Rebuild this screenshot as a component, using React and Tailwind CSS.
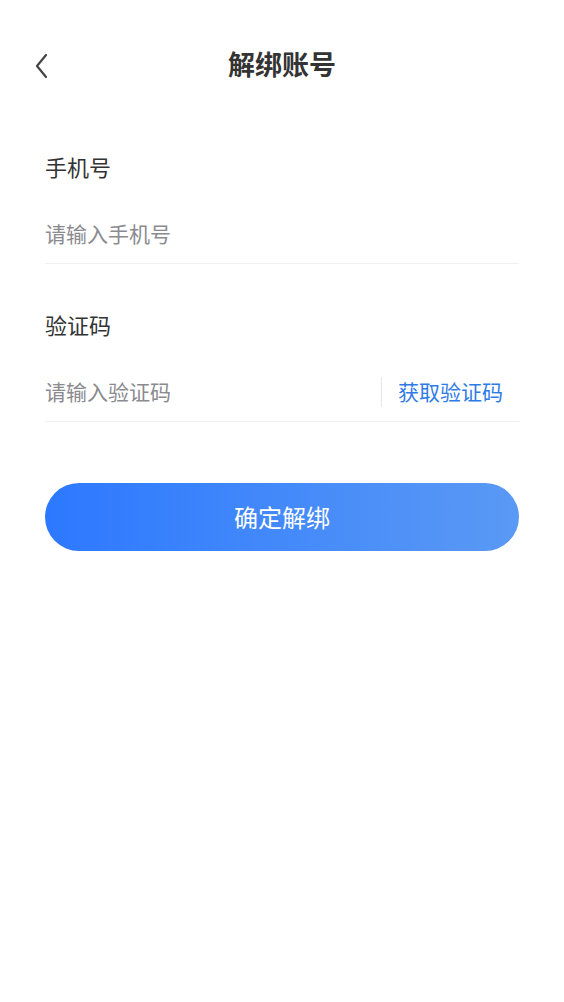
export default function App() {
  return (
    <div className="min-h-[1002px] w-full bg-white text-[#333] font-['Noto_Sans_CJK_SC','Noto_Sans',sans-serif]">
      <div className="relative flex h-[130px] items-start justify-center pt-[44px]">
        <button className="absolute left-[29px] top-[48px] p-1">
          <svg width="18" height="28" viewBox="0 0 18 28" fill="none">
            <path d="M13 3 L4 14 L13 25" stroke="#444" strokeWidth="2.2" strokeLinecap="round" strokeLinejoin="round" />
          </svg>
        </button>
        <h1 className="text-[27px] font-bold leading-[40px] text-[#333]">解绑账号</h1>
      </div>

      <div className="px-[45px]">
        <div className="pt-[19px]">
          <div className="text-[22px] leading-[34px]">手机号</div>
          <div className="mt-[21px] flex h-[60px] items-center border-b border-[#f0f0f0]">
            <span className="text-[21px] text-[#8a8a8f]">请输入手机号</span>
          </div>
        </div>

        <div className="pt-[43px]">
          <div className="text-[22px] leading-[34px]">验证码</div>
          <div className="mt-[21px] flex h-[60px] items-center border-b border-[#f0f0f0]">
            <span className="flex-1 text-[21px] text-[#8a8a8f]">请输入验证码</span>
            <div className="h-[30px] w-px bg-[#e5e5e5]" />
            <span className="pl-[16px] pr-[16px] text-[21px] text-[#2f7be6]">获取验证码</span>
          </div>
        </div>

        <button className="mt-[61px] flex h-[68px] w-full items-center justify-center rounded-full bg-gradient-to-r from-[#2c78ff] to-[#5a99f4] text-[24px] text-white">
          确定解绑
        </button>
      </div>
    </div>
  )
}
